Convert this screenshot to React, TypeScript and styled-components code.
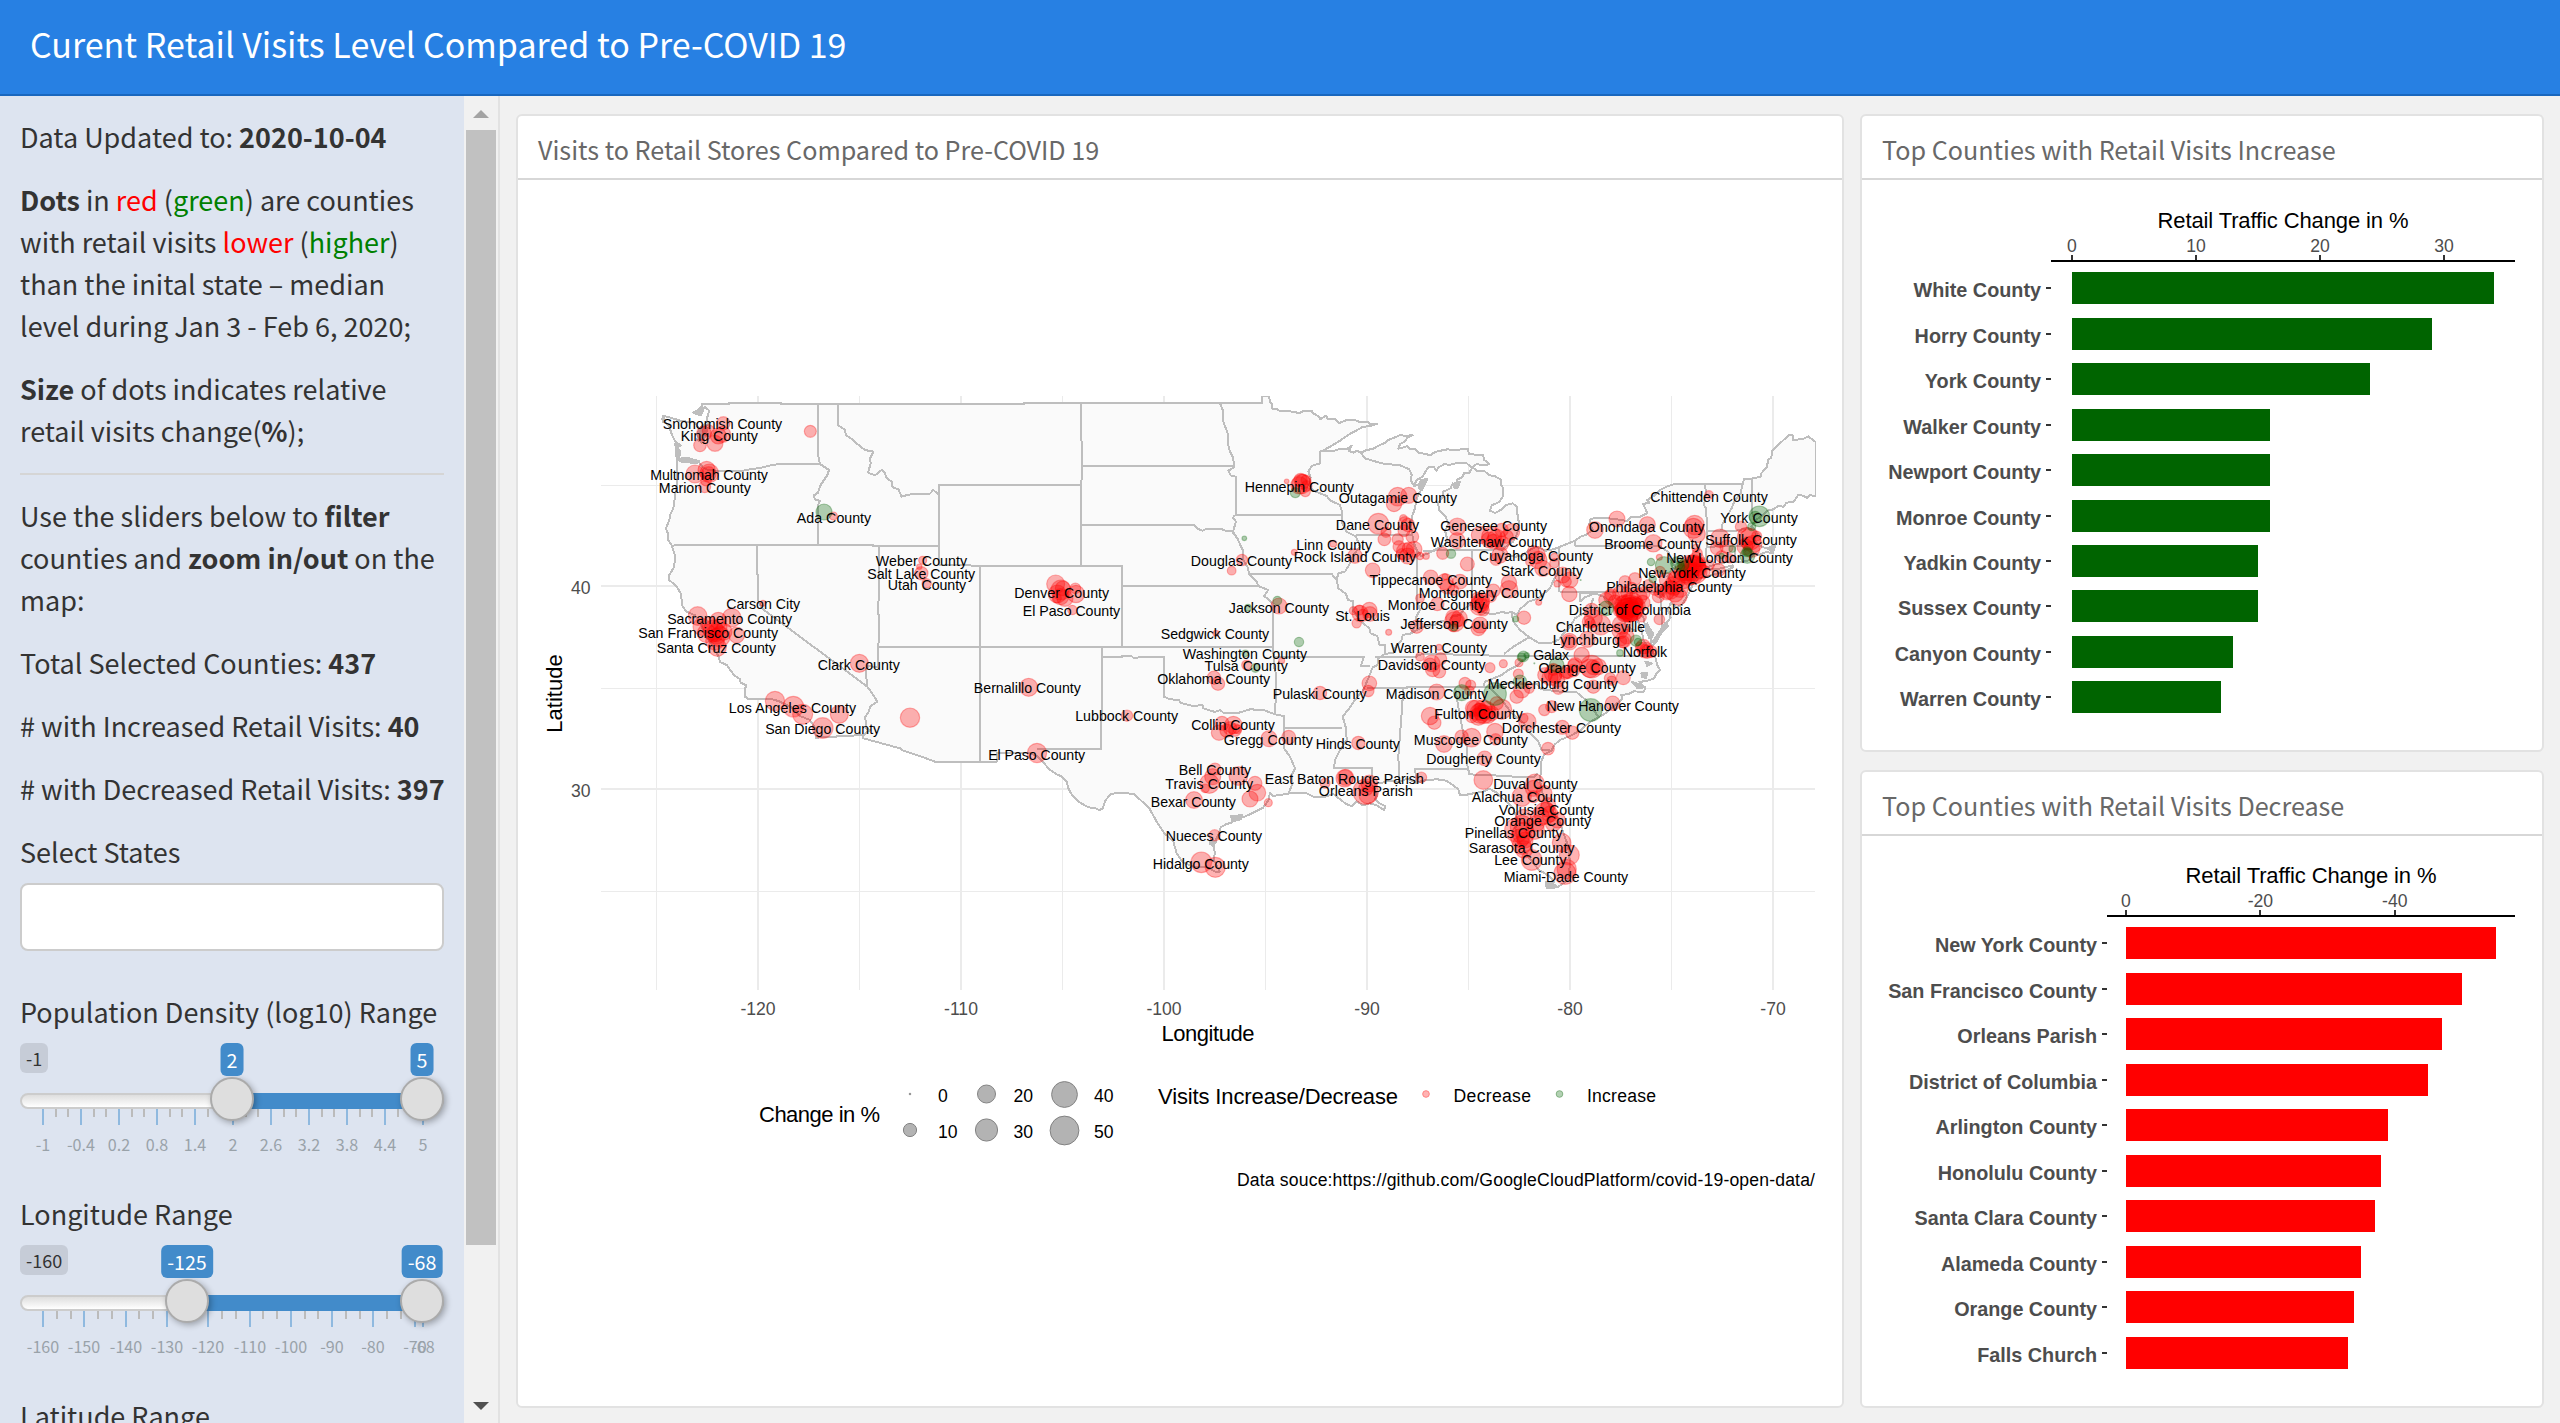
import React from "react";
import styled, { createGlobalStyle } from "styled-components";

const SANS = `"Noto Sans CJK SC", "Open Sans", sans-serif`;
const PLOT = `"Liberation Sans", Arial, sans-serif`;

const GlobalStyle = createGlobalStyle`
  *, *::before, *::after { box-sizing: border-box; }
  body { margin: 0; overflow: hidden; background: #f1f1f1; font-family: ${SANS}; }
`;

/* ---------- page frame ---------- */

const Page = styled.div`
  width: 2560px;
  height: 1423px;
  display: flex;
  flex-direction: column;
  overflow: hidden;
`;

const Navbar = styled.header`
  flex: none;
  height: 96px;
  padding: 0 30px;
  display: flex;
  align-items: center;
  background: #2780e3;
  border-bottom: 2px solid #1967be;
`;

const Brand = styled.h1`
  margin: 0 0 6px;
  font-size: 34px;
  line-height: 50px;
  font-weight: 400;
  color: #fff;
  white-space: nowrap;
`;

const Body = styled.div`
  flex: 1;
  min-height: 0;
  display: flex;
`;

const Sidebar = styled.aside`
  flex: none;
  width: 464px;
  padding: 20px 20px 0;
  overflow: hidden;
  background: #dde4f0;
  color: #333;
  font-size: 27px;
  line-height: 42px;
`;

const Scrollbar = styled.div`
  flex: none;
  width: 36px;
  padding: 14px 2px 13px;
  display: flex;
  flex-direction: column;
  align-items: center;
  background: #f1f1f1;
  border-right: 2px solid #e2e2e2;
`;

const Arrow = styled.span<{ $down?: boolean }>`
  border: 8px solid transparent;
  ${(p) =>
    p.$down
      ? "border-top-color: #505050; border-bottom-width: 0; margin-top: auto;"
      : "border-bottom-color: #a3a3a3; border-top-width: 0;"}
`;

const Thumb = styled.div`
  width: 30px;
  height: 1115px;
  margin-top: 12px;
  background: #c1c1c1;
`;

const Main = styled.main`
  flex: 1;
  display: flex;
  gap: 16px;
  padding: 18px 16px 15px;
`;

const Column = styled.div<{ $width: number }>`
  width: ${(p) => p.$width}px;
  display: flex;
  flex-direction: column;
  gap: 18px;
`;

const Card = styled.section`
  flex: 1;
  display: flex;
  flex-direction: column;
  background: #fff;
  border: 2px solid #e2e2e2;
  border-radius: 6px;
`;

const CardTitle = styled.h2`
  flex: none;
  height: 64px;
  margin: 0;
  padding: 5px 20px 0;
  border-bottom: 2px solid #d7d7d7;
  font-size: 25.15px;
  line-height: 56px;
  font-weight: 400;
  color: #686868;
  white-space: nowrap;
`;

const Plot = styled.svg`
  display: block;
  font-family: ${PLOT};
`;

/* ---------- sidebar ---------- */

const Para = styled.p`
  margin: 0 0 21px;
  white-space: nowrap;
`;

const Tone = styled.span<{ $color: string }>`
  color: ${(p) => p.$color};
`;

const Rule = styled.hr`
  height: 2px;
  margin: 21px 0 20px;
  border: 0;
  background: #d5d5d5;
`;

const Label = styled.div`
  white-space: nowrap;
`;

const SelectBox = styled.div`
  height: 68px;
  margin: 10px 0 40px;
  background: #fff;
  border: 2px solid #ccc;
  border-radius: 8px;
`;

const SliderBox = styled.div`
  position: relative;
  height: 118px;
  margin: 10px 0 32px;
  padding-top: 50px;
`;

const Track = styled.div`
  height: 16px;
  border: 2px solid #ccc;
  border-radius: 16px;
  background: linear-gradient(#dedede, #fff);
`;

const Range = styled.div`
  position: absolute;
  top: 50px;
  height: 16px;
  background: #428bca;
`;

const Handle = styled.div`
  position: absolute;
  top: 34px;
  width: 44px;
  height: 44px;
  margin-left: -22px;
  border: 2px solid #ababab;
  border-radius: 50%;
  background: #dedede;
  box-shadow: 2px 2px 6px rgba(0, 0, 0, 0.3);
`;

const MinBadge = styled.div`
  position: absolute;
  left: 0;
  top: 0;
  height: 30px;
  padding: 0 6px;
  border-radius: 6px;
  background: rgba(0, 0, 0, 0.1);
  font-size: 18px;
  line-height: 30px;
`;

const ValueBadge = styled.div`
  position: absolute;
  top: 0;
  height: 33px;
  padding: 1px 6px 0;
  border-radius: 6px;
  transform: translateX(-50%);
  background: #428bca;
  color: #fff;
  font-size: 19.7px;
  line-height: 32px;
`;

const Tick = styled.i<{ $major?: boolean }>`
  position: absolute;
  top: 66px;
  width: 2px;
  height: ${(p) => (p.$major ? 16 : 8)}px;
  margin-left: -1px;
  background: ${(p) => (p.$major ? "#8fb9df" : "#bbb")};
`;

const TickLabel = styled.span`
  position: absolute;
  top: 91px;
  transform: translateX(-50%);
  font-size: 16.1px;
  line-height: 20px;
  color: #99a2a9;
`;

type SliderProps = {
  min: string;
  from: string;
  to: string;
  fromX: number;
  toX: number;
  majors: [number, string][];
  minors: number[];
};

function Slider({ min, from, to, fromX, toX, majors, minors }: SliderProps) {
  return (
    <SliderBox>
      <Track />
      {majors.map(([x, label]) => (
        <React.Fragment key={label}>
          <Tick $major style={{ left: x }} />
          <TickLabel style={{ left: x }}>{label}</TickLabel>
        </React.Fragment>
      ))}
      {minors.map((x) => (
        <Tick key={x} style={{ left: x }} />
      ))}
      <Range style={{ left: fromX, width: toX - fromX }} />
      <Handle style={{ left: fromX }} />
      <Handle style={{ left: toX }} />
      <MinBadge>{min}</MinBadge>
      <ValueBadge style={{ left: fromX }}>{from}</ValueBadge>
      <ValueBadge style={{ left: toX }}>{to}</ValueBadge>
    </SliderBox>
  );
}

const minorsBetween = (start: number, step: number, groups: number) =>
  Array.from({ length: groups * 2 }, (_, i) =>
    Math.round(start + Math.floor(i / 2) * step + ((i % 2) + 1) * (step / 3))
  );

const densityMajors = ["-1", "-0.4", "0.2", "0.8", "1.4", "2", "2.6", "3.2", "3.8", "4.4", "5"].map(
  (t, i) => [23 + i * 38, t] as [number, string]
);
const lonMajors = [
  ...["-160", "-150", "-140", "-130", "-120", "-110", "-100", "-90", "-80", "-70"].map(
    (t, i) => [Math.round(23 + i * 41.3), t] as [number, string]
  ),
  [403, "-68"] as [number, string],
];

/* ---------- map data ---------- */
/* Points are kept at three units per pixel on four sheets laid side by side;
   each sheet has its own x origin. */

const SHEET = { w: 0, c: 1140, m: 2220, e: 2940 };
type Sheet = keyof typeof SHEET;

const line = (sheet: Sheet, pts: string) =>
  pts
    .trim()
    .split(/\s+/)
    .map((p) => {
      const [x, y] = p.split(",").map(Number);
      return `${x + SHEET[sheet]},${y}`;
    })
    .join(" ");

const outline = [
  line("w", "366,72 448,72 448,69 604,69 604,72 1140,72"),
  line("c", "192,72 192,69 906,69 906,48 927,48 930,66 936,72 936,86 950,86 960,94 990,94 1018,99 1030,93 1055,93 1060,100 1078,110 1080,118 1098,107 1104,118 1125,118 1138,129 1160,120 1180,119 1200,126"),
  line("m", "145,127 150,132 172,131 150,138 128,141 112,150 92,160 60,182 30,200 8,212 40,213 62,206 78,208 95,197 86,212 100,218 112,212 122,218 138,211 160,206 178,196 196,188 205,180 225,172 240,165 258,168 278,165 262,174 255,184 240,192 235,206 250,202 262,198 268,206 284,206 296,218 318,222 330,226 345,216 362,212 382,208 402,210 425,208 445,206 446,221 465,224 490,226 492,240 502,246 508,253 488,256 470,252 455,262 440,250 415,248 390,254 372,253 356,262 350,272 342,262 325,262 318,272 308,290 290,300 282,318 296,315 304,300 322,297 314,312 306,328 296,340 288,365 285,385 276,410 273,440 278,470 282,490 291,512 304,528 325,520 350,506 372,497 382,480 376,455 384,430 376,408 358,390 354,370 368,352 370,335 392,325 398,310 404,325 414,318 410,300 426,292 432,280 448,278 458,262 470,272 492,272 508,286 524,288 544,300 542,312 550,325 548,350 538,366 515,376 510,392 526,399 542,390 556,376 578,370 590,380 592,400 597,430 592,460 580,485 560,498 545,510 555,522 585,530 605,528 625,512 650,500 678,512 700,508 720,500"),
  line("e", "20,492 45,482 62,470 80,464 98,448 88,432 92,416 120,414 160,416 200,423 212,412 240,410 262,400 250,372 268,368 262,360 285,345 300,330 320,320 340,313 435,313 548,312 552,297 575,296 602,290 604,280 620,262 625,240 634,232 637,212 660,190 688,164 698,165 700,180 730,177 745,169 768,187 768,348 750,346 742,354 728,347 715,345 706,358 700,365 680,368 670,380 655,378 640,388 622,392 605,408 588,420 574,440 586,452 590,462 580,478 600,498 622,506 640,496 640,520 620,516 598,524 580,522 570,540 545,546 505,546 470,552 430,566 470,568 518,556 520,562 480,578 440,590 404,596 396,620 384,645 366,675 350,682 332,668 324,690 332,712 320,728 318,745 302,762 290,785 276,800 272,780 280,760 268,745 255,735 250,710 236,700 234,680 232,720 244,745 250,780 262,800 278,815 288,838 292,856 300,870 290,880 282,895 258,904 238,905 256,925 250,936 222,934 205,942 184,945 186,958 165,975 140,998 115,1012 90,1026 62,1050 35,1066 0,1080"),
  line("m", "704,1094 694,1112 672,1124 664,1145 662,1180 660,1200 668,1240 690,1280 720,1330 745,1400 750,1450 745,1500 712,1522 680,1522 680,1508 702,1506 690,1490 655,1468 625,1430 612,1408 592,1375 586,1345 592,1320 580,1285 556,1262 530,1238 508,1226 490,1235 460,1240 440,1244 420,1246 415,1228 400,1216 378,1202 352,1198 320,1200 288,1208 262,1196 238,1206 205,1202 188,1208 170,1210 160,1218 172,1244 165,1258 178,1270 196,1278 192,1290 170,1276 150,1270 128,1276 110,1264 95,1278 78,1272 58,1256 40,1242 12,1252 -5,1250"),
  line("c", "1060,1250 1040,1240 990,1240 965,1244 938,1248 930,1238 925,1262 908,1284 880,1298 850,1312 838,1305 832,1318 818,1310 816,1328 800,1332 782,1342 778,1356 770,1375 762,1390 764,1420 762,1440 780,1475 766,1475 740,1462 700,1460 668,1447 650,1420 640,1385 612,1358 590,1325 568,1285 550,1268 522,1242 500,1240 470,1238 450,1244 436,1262 428,1285 418,1290 404,1284 385,1282 355,1265 336,1245 325,1225 320,1205 306,1190 288,1182 268,1168 248,1145 232,1128 205,1118 110,1118 110,1145 0,1145"),
  line("w", "1065,1145 1025,1130 970,1112 960,1105 905,1090 850,1075 850,1065 708,1073 704,1042 690,1020 660,1008 640,985 600,965 575,957 505,957 495,950 497,915 482,908 480,898 462,885 440,855 420,846 416,830 400,800 372,760 362,730 345,706 320,695 308,680 302,640 290,620 268,600 268,585 282,562 286,530 275,496 265,480 264,462 258,445 268,420 270,405 280,385 285,350 292,300 292,250 288,210 300,195 286,185 276,165 268,140 256,125 246,118 250,107 275,114 300,122 345,128 360,150 362,178 372,185 376,160 386,140 380,118 388,92 376,82 366,84"),
].join(" ");

const borders: [Sheet, string][] = [
  ["w", "292,238 330,236 358,248 368,262 385,270 430,274 490,272 510,268 540,264 575,255 600,252 720,252"],
  ["w", "714,72 714,225 720,252 735,262 747,270 742,285 722,315 714,338 702,346 704,358 720,362 714,375 714,495"],
  ["w", "774,72 774,135 795,150 798,165 816,178 832,192 855,210 880,215 870,235 872,250 864,278 885,286 905,270 915,280 918,292 935,305 938,322 955,328 965,350 985,344 1020,341 1050,341 1060,330 1077,345"],
  ["w", "1077,556 1077,315 1503,315"],
  ["w", "1077,556 1626,559 1626,801"],
  ["w", "275,497 300,495 880,495 880,498 1077,498"],
  ["w", "531,497 534,660 545,685 862,920"],
  ["w", "898,498 895,700 898,720 893,862 865,858 857,870 862,920 880,945 892,965 872,978 866,995 856,1010 858,1045 870,1050 850,1066"],
  ["w", "898,801 2080,801"],
  ["w", "1200,556 1200,1145"],
  ["c", "363,69 363,175 366,190 366,280 363,320 363,556"],
  ["c", "366,258 820,258"],
  ["c", "363,435 702,435 712,446 728,452 740,446 782,446 800,454 818,454 828,468"],
  ["c", "486,618 892,618"],
  ["c", "780,69 788,90 788,120 803,160 806,205 820,235 822,262 805,272 812,286 828,290 828,405 1145,405"],
  ["c", "822,405 820,415 828,425 818,458 832,475 848,510 850,540 862,560 868,582 890,605 895,618 925,630 912,648 930,662 940,672 940,805"],
  ["c", "868,582 1115,582 1128,598"],
  ["c", "1088,210 1080,215 1080,250 1055,258 1045,275 1052,292 1048,315 1060,332 1100,348 1112,362 1140,375 1146,395 1145,425 1160,455 1188,470"],
  ["c", "427,801 427,832 425,1000 423,1107 230,1107"],
  ["c", "427,832 485,832 485,829 515,829 520,833 612,830 612,950 630,958 658,960 660,968 700,978 728,975 730,985 765,996 780,990 790,998 830,1000 870,988 910,990 945,1003"],
  ["c", "940,805 942,860 948,880 948,940 945,1003 972,1008 972,1105 990,1130 1005,1165 995,1185 998,1210 985,1242"],
  ["c", "972,1043 1145,1043"],
  ["c", "940,831 1212,831 1202,858 1230,858"],
  ["m", "108,470 120,500 100,525 90,550 75,575 55,580 50,600 55,625 78,642 84,660 100,664 98,690 120,722 148,745 152,760 172,768 178,795 195,795 194,822 175,835 172,855 158,862 145,895 130,930 105,960 88,985 68,1010 78,1045 80,1080 60,1110 45,1140 42,1165 157,1165 155,1190 165,1215"],
  ["m", "194,822 220,818 230,795 245,780 248,765 275,760 290,750 310,740 345,735 365,722 385,730 395,710 420,705 430,690 450,672 480,695 520,703 548,695 560,700 575,695 590,705 600,688 625,665 655,655 690,625 700,602 716,575 716,505 716,636"],
  ["m", "575,700 580,725 600,750 628,772 605,785 580,800 552,822"],
  ["m", "628,772 655,788 690,790 718,778 730,760 750,740 765,715 790,700 810,680 820,655"],
  ["m", "108,466 280,466"],
  ["m", "122,218 135,235 185,250 240,256 268,268 275,285 272,300 282,318"],
  ["m", "291,512 291,660 300,690 288,712 290,730 272,760"],
  ["m", "310,512 457,510 545,508"],
  ["m", "457,510 457,672"],
  ["m", "165,830 290,830 290,824 345,822 560,828 1005,829"],
  ["m", "140,925 260,925 260,920 440,920 490,920 560,922"],
  ["m", "250,925 245,1000 235,1130 238,1205"],
  ["m", "405,922 420,1010 430,1060 440,1100 440,1145 448,1183 540,1187 610,1192 640,1192 655,1180"],
  ["m", "290,1205 285,1167 440,1167"],
  ["m", "510,925 545,960 575,1000 612,1030 630,1060 655,1085 665,1110 690,1110"],
  ["m", "510,925 560,910 650,912 665,928 735,937 770,937 800,962 835,1010"],
  ["m", "490,920 495,905 520,895 545,885 565,870 595,855 610,840 625,830"],
  ["e", "0,636 300,636 305,700 305,745 322,745"],
  ["e", "60,665 60,638 105,640 75,652 60,665"],
  ["e", "105,640 130,650 150,670 170,690 190,715 200,740 230,755"],
  ["e", "45,485 45,497 300,497 312,508 325,515 330,535 345,560 322,590 336,610 315,635 300,650"],
  ["e", "330,535 400,575"],
  ["e", "435,313 438,340 432,375 438,385 442,450 440,500 435,545"],
  ["e", "548,312 542,340 525,360 515,385 500,410 488,430 484,452"],
  ["e", "440,452 530,452 560,445 575,446"],
  ["e", "440,500 550,498 558,515"],
  ["e", "525,500 525,545"],
  ["e", "575,296 577,400 585,425"],
];

/* inlets and sounds dense enough to read as solid grey */
const inlets: [Sheet, string][] = [
  ["w", "340,98 355,90 362,82 370,92 362,106 350,102"],
  ["w", "352,178 356,150 364,140 376,130 382,150 372,172 364,188"],
  ["w", "250,112 256,122 248,126"],
  ["w", "286,192 302,196 290,202 300,212 298,236 290,234"],
  ["w", "295,236 325,234 358,244 350,250 300,244"],
  ["c", "812,1308 846,1306 842,1318 818,1324"],
  ["c", "752,1378 768,1385 760,1398 750,1392"],
  ["m", "678,1506 700,1512 715,1522 680,1524"],
  ["m", "405,310 420,305 412,325"],
  ["m", "296,312 322,296 306,330 298,325"],
  ["e", "244,880 262,878 258,894 246,890"],
  ["e", "215,905 235,912 256,922 232,924"],
  ["e", "256,845 275,850 262,858"],
  ["e", "620,505 645,498 640,516"],
  ["e", "262,730 275,760 268,775 258,750"],
  ["e", "316,728 324,738 300,764 282,790 278,786 298,756"],
];

type Dot = [number, number, number];

const decrease: Record<Sheet, Dot[]> = {
  w: [
    [430, 130, 20], [372, 160, 22], [385, 152, 18], [360, 196, 19], [405, 190, 24], [415, 168, 24], [428, 163, 24], [691, 154, 18],
    [345, 282, 27], [380, 270, 26], [388, 280, 28], [386, 282, 22], [374, 320, 18], [378, 302, 16], [760, 408, 12],
    [1028, 541, 12], [1018, 560, 8], [1024, 580, 20], [1040, 610, 14], [549, 670, 9],
    [353, 708, 28], [455, 713, 28], [415, 722, 25], [365, 740, 26], [380, 760, 28], [400, 750, 30], [410, 762, 30], [420, 770, 30], [405, 782, 28],
    [430, 755, 26], [412, 802, 27], [470, 765, 24], [390, 735, 24], [417, 742, 24], [408, 765, 20], [400, 770, 16],
    [838, 850, 27], [585, 963, 29], [640, 980, 31], [668, 1003, 30], [778, 1003, 27], [728, 1044, 31], [990, 1013, 29],
  ],
  c: [
    [287, 612, 27], [303, 630, 30], [292, 642, 27], [302, 650, 24], [315, 655, 24], [346, 625, 16], [348, 642, 26], [308, 625, 22], [290, 655, 14], [337, 690, 14],
    [206, 922, 27], [501, 1007, 17], [231, 1119, 29], [1022, 300, 20], [1025, 312, 29], [1018, 316, 26], [1036, 335, 15], [1038, 300, 15], [1028, 305, 22], [1040, 318, 16], [980, 304, 7],
    [846, 540, 17], [815, 572, 13], [957, 678, 24], [768, 760, 9], [860, 855, 15], [965, 842, 9], [762, 893, 20], [774, 911, 20], [1080, 939, 20], [1003, 517, 9], [1120, 491, 10],
    [786, 1030, 21], [820, 1035, 26], [777, 1058, 23], [800, 1052, 20], [825, 1050, 19], [810, 1045, 20], [832, 1048, 13], [927, 1076, 24], [986, 1072, 21],
    [765, 1167, 18], [758, 1190, 24], [748, 1211, 29], [735, 1225, 13], [835, 1188, 28], [885, 1210, 21], [892, 1238, 25], [870, 1257, 24], [925, 1268, 12],
    [702, 1260, 25], [764, 1366, 17], [724, 1447, 31], [766, 1462, 30],
  ],
  m: [
    [233, 350, 28], [266, 346, 24], [222, 372, 23], [175, 431, 31], [255, 430, 20], [264, 435, 20], [250, 415, 11], [198, 457, 15], [193, 478, 19], [233, 478, 17], [277, 470, 19], [237, 500, 18],
    [255, 515, 26], [263, 528, 24], [282, 508, 24], [245, 522, 16], [265, 505, 18], [300, 528, 11], [318, 528, 10], [105, 528, 22], [158, 571, 22], [252, 452, 18],
    [412, 440, 26], [411, 482, 24], [368, 520, 18], [442, 552, 21], [480, 465, 26], [515, 470, 30], [530, 475, 27], [508, 480, 24], [545, 450, 20], [545, 490, 22], [575, 455, 24], [560, 470, 20], [520, 485, 22],
    [528, 538, 18], [540, 525, 24], [650, 525, 26], [655, 540, 26], [668, 565, 24], [640, 515, 18], [630, 545, 13], [703, 550, 14], [703, 532, 12], [728, 585, 24], [750, 600, 24], [738, 605, 16], [712, 611, 10], [748, 642, 23],
    [567, 608, 23], [567, 628, 26], [520, 632, 20], [512, 650, 17], [480, 670, 28], [478, 678, 28], [485, 662, 24], [490, 690, 18], [472, 655, 18], [482, 675, 20],
    [332, 592, 22], [375, 605, 24], [382, 620, 22], [420, 605, 22], [375, 590, 9], [400, 630, 16], [352, 672, 20], [300, 655, 13], [656, 667, 9], [290, 740, 20], [612, 713, 20],
    [400, 712, 23], [404, 725, 30], [418, 715, 24], [410, 722, 20], [400, 740, 15], [475, 745, 22], [480, 735, 24], [206, 757, 9], [148, 690, 23], [120, 700, 24], [100, 692, 12], [110, 730, 14], [150, 702, 22], [128, 706, 18], [118, 690, 15],
    [357, 802, 9], [300, 830, 13], [362, 836, 18], [335, 850, 25], [338, 868, 22], [358, 875, 19], [330, 852, 18], [510, 863, 15], [550, 851, 12], [597, 848, 12], [148, 910, 22], [145, 933, 17],
    [350, 936, 24], [435, 910, 18], [452, 915, 15], [448, 932, 14], [595, 882, 15], [605, 930, 24], [590, 950, 20], [628, 925, 15], [330, 1008, 26], [343, 1028, 20],
    [460, 985, 24], [470, 990, 30], [480, 1000, 30], [492, 1003, 28], [500, 990, 26], [475, 1010, 26], [515, 1000, 22], [490, 985, 26], [505, 1008, 22], [455, 1010, 18], [530, 970, 20], [545, 988, 30],
    [485, 998, 24], [478, 990, 20],
    [525, 1055, 25], [527, 1078, 17], [372, 1092, 25], [425, 1070, 20], [455, 1073, 28], [494, 1135, 22], [622, 1025, 26], [610, 1015, 14], [673, 990, 17], [695, 980, 18], [727, 1042, 21], [757, 1058, 20], [684, 1106, 19],
    [304, 1192, 16], [115, 1089, 20], [15, 1210, 15], [77, 1192, 24], [74, 1195, 26], [148, 1210, 25], [137, 1235, 38], [143, 1245, 26], [138, 1225, 22], [490, 1200, 28],
    [645, 1210, 28], [640, 1225, 24], [605, 1250, 29], [640, 1250, 18], [672, 1240, 24], [685, 1275, 22], [675, 1300, 33], [660, 1310, 28], [690, 1302, 24], [680, 1288, 22], [650, 1330, 24],
    [605, 1340, 34], [590, 1350, 36], [610, 1360, 33], [600, 1375, 28], [615, 1380, 24], [605, 1395, 28], [612, 1408, 26], [645, 1350, 28], [700, 1330, 24], [712, 1320, 24], [610, 1310, 22],
    [635, 1440, 31], [725, 1388, 28], [748, 1425, 30], [735, 1480, 33], [740, 1467, 29],
    [700, 880, 27], [690, 892, 24], [712, 900, 22], [675, 885, 22], [715, 925, 18], [740, 875, 20], [700, 868, 18], [705, 890, 20], [765, 855, 22], [745, 880, 16],
  ],
  e: [
    [105, 450, 25], [171, 417, 24], [262, 434, 24], [404, 435, 29], [400, 445, 30], [410, 462, 26], [447, 345, 13], [543, 440, 17], [480, 475, 28], [470, 505, 19], [500, 500, 20],
    [560, 470, 28], [570, 478, 32], [580, 492, 26], [590, 468, 15], [555, 500, 24], [575, 508, 24], [565, 490, 20], [280, 490, 26], [298, 532, 9], [300, 575, 16],
    [390, 560, 34], [400, 565, 38], [405, 575, 36], [380, 572, 30], [395, 580, 34], [410, 560, 28], [388, 588, 28], [402, 552, 28], [410, 538, 22], [412, 520, 15], [430, 575, 20], [365, 578, 24], [370, 600, 26], [350, 600, 26],
    [385, 565, 26], [395, 572, 22], [408, 552, 24], [380, 585, 24], [422, 545, 14], [408, 505, 12],
    [340, 618, 28], [360, 628, 24], [330, 630, 28], [320, 638, 22], [345, 640, 26], [355, 650, 26], [335, 622, 20], [300, 635, 18], [295, 650, 18], [285, 628, 18], [320, 600, 22], [345, 590, 18], [475, 570, 20], [510, 535, 14], [485, 530, 18], [448, 555, 15],
    [225, 597, 19], [195, 605, 18], [180, 640, 22], [155, 650, 24], [138, 660, 22], [215, 625, 18], [250, 640, 20], [235, 650, 26], [248, 668, 22], [165, 665, 20], [152, 645, 16], [200, 640, 18], [265, 615, 16],
    [200, 680, 36], [210, 685, 40], [205, 690, 36], [215, 672, 34], [190, 677, 30], [220, 695, 28], [195, 700, 26], [230, 680, 26], [210, 700, 26], [205, 680, 26], [210, 685, 24], [180, 692, 20], [245, 712, 14],
    [196, 688, 30], [216, 682, 30], [204, 694, 28], [225, 672, 22], [188, 690, 24], [212, 700, 22],
    [298, 718, 16], [95, 692, 22], [100, 715, 27], [85, 725, 18], [122, 735, 30], [90, 730, 16], [185, 735, 28], [180, 752, 24], [200, 770, 22], [190, 780, 24], [190, 785, 18], [186, 783, 14],
    [250, 800, 22], [255, 810, 24], [262, 815, 20], [240, 800, 14], [255, 808, 15], [274, 815, 18], [65, 825, 23], [95, 860, 34], [90, 865, 28], [115, 860, 24], [100, 862, 22], [42, 855, 18], [40, 872, 19], [82, 778, 24], [28, 785, 25], [28, 785, 19],
    [100, 920, 20], [150, 895, 17], [190, 893, 21], [155, 902, 14], [15, 880, 18], [158, 970, 22],
  ],
};

const increase: Record<Sheet, Dot[]> = {
  w: [[732, 396, 24]],
  c: [[1006, 338, 15], [853, 475, 7], [952, 662, 13], [864, 683, 10], [1017, 786, 14], [856, 820, 10], [886, 864, 13]],
  m: [[393, 521, 14], [587, 717, 9], [402, 742, 11], [610, 829, 16], [605, 832, 13], [620, 826, 8], [643, 850, 1.5], [425, 938, 24], [600, 905, 20], [525, 942, 34], [710, 855, 22], [782, 600, 1.5]],
  e: [[598, 409, 31], [575, 440, 12], [586, 412, 18], [517, 507, 10], [561, 515, 15], [562, 516, 12], [562, 528, 22], [273, 546, 11], [312, 556, 26], [278, 597, 11], [352, 550, 20], [370, 555, 17], [360, 560, 14], [139, 685, 22], [228, 782, 17], [234, 786, 11], [180, 819, 10], [92, 990, 34], [485, 528, 8]],
};

/* label, left edge, right edge, middle of the capitals */
const counties: [Sheet, string, number, number, number][] = [
  ["w", "Snohomish County", 250, 605, 130],
  ["w", "King County", 304, 532, 166],
  ["w", "Multnomah County", 212, 562, 283],
  ["w", "Marion County", 238, 511, 322],
  ["w", "Ada County", 652, 872, 412],
  ["w", "Weber County", 889, 1160, 541],
  ["w", "Salt Lake County", 863, 1184, 580],
  ["w", "Utah County", 925, 1157, 613],
  ["w", "Carson City", 440, 659, 672],
  ["w", "Sacramento County", 263, 635, 715],
  ["w", "San Francisco County", 176, 593, 757],
  ["w", "Santa Cruz County", 232, 586, 802],
  ["w", "Clark County", 715, 958, 853],
  ["w", "Los Angeles County", 448, 827, 982],
  ["w", "San Diego County", 557, 899, 1046],
  ["c", "Denver County", 164, 446, 637],
  ["c", "El Paso County", 190, 479, 691],
  ["c", "Bernalillo County", 43, 361, 922],
  ["c", "Lubbock County", 347, 653, 1008],
  ["c", "El Paso County", 86, 374, 1123],
  ["c", "Hennepin County", 856, 1180, 319],
  ["c", "Douglas County", 694, 995, 541],
  ["c", "Jackson County", 808, 1106, 682],
  ["c", "Sedgwick County", 604, 926, 760],
  ["c", "Washington County", 670, 1040, 820],
  ["c", "Tulsa County", 735, 982, 856],
  ["c", "Oklahoma County", 593, 929, 895],
  ["c", "Collin County", 695, 943, 1035],
  ["c", "Gregg County", 793, 1057, 1078],
  ["c", "Bell County", 658, 872, 1168],
  ["c", "Travis County", 617, 878, 1210],
  ["c", "Bexar County", 574, 826, 1264],
  ["c", "Nueces County", 619, 905, 1368],
  ["c", "Hidalgo County", 580, 865, 1450],
  ["m", "Outagamie County", 58, 410, 352],
  ["m", "Dane County", 49, 296, 433],
  ["m", "Linn County", -70, 155, 493],
  ["m", "Rock Island County", -77, 287, 531],
  ["m", "Pulaski County", -140, 138, 940],
  ["m", "St. Louis", 47, 208, 706],
  ["m", "Tippecanoe County", 150, 515, 598],
  ["m", "Genesee County", 362, 680, 436],
  ["m", "Washtenaw County", 334, 698, 484],
  ["m", "Cuyahoga County", 478, 818, 526],
  ["m", "Stark County", 544, 788, 571],
  ["m", "Montgomery County", 298, 676, 637],
  ["m", "Monroe County", 205, 493, 673],
  ["m", "Jefferson County", 243, 562, 730],
  ["m", "Warren County", 214, 500, 804],
  ["m", "Davidson County", 175, 495, 853],
  ["m", "Galax", 641, 746, 823],
  ["m", "Madison County", 199, 503, 940],
  ["m", "Mecklenburg County", 505, 892, 910],
  ["m", "Fulton County", 344, 607, 1000],
  ["m", "Muscogee County", 283, 622, 1078],
  ["m", "Dougherty County", 320, 661, 1135],
  ["m", "Hinds County", -11, 238, 1092],
  ["m", "East Baton Rouge Parish", -164, 310, 1197],
  ["m", "Orleans Parish", -2, 277, 1231],
  ["m", "Duval County", 521, 771, 1210],
  ["m", "Alachua County", 457, 754, 1249],
  ["m", "Volusia County", 538, 821, 1288],
  ["m", "Orange County", 524, 812, 1321],
  ["m", "Pinellas County", 436, 726, 1357],
  ["m", "Sarasota County", 448, 762, 1402],
  ["m", "Lee County", 524, 738, 1438],
  ["m", "Miami-Dade County", 553, 923, 1489],
  ["e", "Chittenden County", 272, 622, 349],
  ["e", "York County", 482, 712, 412],
  ["e", "Onondaga County", 88, 432, 439],
  ["e", "Broome County", 134, 423, 490],
  ["e", "Suffolk County", 437, 709, 478],
  ["e", "New London County", 320, 697, 532],
  ["e", "New York County", 236, 556, 577],
  ["e", "Philadelphia County", 140, 515, 620],
  ["e", "District of Columbia", 28, 391, 688],
  ["e", "Charlottesville", -11, 254, 741],
  ["e", "Lynchburg", -20, 178, 778],
  ["e", "Norfolk", 190, 320, 814],
  ["e", "Orange County", -63, 226, 862],
  ["e", "New Hanover County", -39, 355, 976],
  ["e", "Dorchester County", -173, 182, 1042],
];

const MAP_X = 580;
const MAP_Y = 380;

const AxisText = styled.text`
  font-size: 17.6px;
  fill: #4d4d4d;
`;
const AxisTitle = styled.text`
  font-size: 22px;
  fill: #000;
`;
const KeyText = styled.text`
  font-size: 17.6px;
  fill: #000;
`;
const CountyText = styled.text`
  font-size: 14.2px;
  fill: #000;
`;
const BarText = styled.text`
  font-size: 19.8px;
  font-weight: 700;
  fill: #4d4d4d;
`;

function Dots({ data, color }: { data: Record<Sheet, Dot[]>; color: string }) {
  return (
    <g fill={color} stroke={color} fillOpacity={0.3} strokeOpacity={0.3} strokeWidth={1.2}>
      {(Object.keys(data) as Sheet[]).flatMap((s) =>
        data[s].map(([x, y, r], i) => (
          <circle key={s + i} cx={MAP_X + (x + SHEET[s]) / 3} cy={MAP_Y + y / 3} r={r / 3} />
        ))
      )}
    </g>
  );
}

const sizeKeys: [number, number, number, string, number][] = [
  [910, 1094, 0.8, "0", 938],
  [910, 1130, 6.6, "10", 938],
  [986.5, 1094, 9, "20", 1013.5],
  [986.5, 1130, 11.1, "30", 1013.5],
  [1064.5, 1094.5, 12.9, "40", 1094],
  [1064.5, 1130.5, 14.4, "50", 1094],
];

function VisitsMap() {
  return (
    <Plot width={1324} height={1226} viewBox="518 180 1324 1226">
      <defs>
        <clipPath id="panel">
          <rect x={601} y={396} width={1215} height={594} />
        </clipPath>
      </defs>
      <g stroke="#ebebeb" shapeRendering="crispEdges">
        {[656, 859, 1062, 1265, 1468, 1671].map((x) => (
          <line key={x} x1={x + 0.5} x2={x + 0.5} y1={396} y2={990} />
        ))}
        {[485, 688, 891].map((y) => (
          <line key={y} y1={y + 0.5} y2={y + 0.5} x1={601} x2={1815} />
        ))}
        {[758, 961, 1164, 1367, 1570, 1773].map((x) => (
          <line key={x} x1={x} x2={x} y1={396} y2={990} strokeWidth={2} />
        ))}
        {[586, 789].map((y) => (
          <line key={y} y1={y} y2={y} x1={601} x2={1815} strokeWidth={2} />
        ))}
      </g>
      <g clipPath="url(#panel)">
        <g
          transform={`translate(${MAP_X} ${MAP_Y}) scale(0.33333)`}
          stroke="#bebebe"
          strokeWidth={6}
          fill="none"
          strokeLinejoin="round"
          shapeRendering="crispEdges"
        >
          <polygon points={outline} fill="#fafafa" />
          {borders.map(([s, pts], i) => (
            <polyline key={i} points={line(s, pts)} />
          ))}
          {inlets.map(([s, pts], i) => (
            <polygon key={i} points={line(s, pts)} fill="#bebebe" />
          ))}
        </g>
        <Dots data={decrease} color="#ff0000" />
        <Dots data={increase} color="#006400" />
      </g>
      {counties.map(([s, name, x1, x2, y], i) => (
        <CountyText
          key={i}
          x={MAP_X + (SHEET[s] + x1) / 3 - 0.5}
          y={MAP_Y + y / 3 + 5.3}
          textLength={(x2 - x1) / 3 + 1}
        >
          {name}
        </CountyText>
      ))}
      {[-120, -110, -100, -90, -80, -70].map((v, i) => (
        <AxisText key={v} x={758 + i * 203} y={1014.5} textAnchor="middle">
          {v}
        </AxisText>
      ))}
      <AxisText x={590.5} y={593.5} textAnchor="end">40</AxisText>
      <AxisText x={590.5} y={796.5} textAnchor="end">30</AxisText>
      <AxisTitle x={1208} y={1041} textAnchor="middle" textLength={93}>Longitude</AxisTitle>
      <AxisTitle transform="translate(562 693.5) rotate(-90)" textAnchor="middle">Latitude</AxisTitle>
      <AxisTitle x={759} y={1122} textLength={121}>Change in %</AxisTitle>
      {sizeKeys.map(([cx, cy, r, label, tx]) => (
        <g key={label}>
          <circle cx={cx} cy={cy} r={r} fill="#b3b3b3" stroke="#838383" />
          <KeyText x={tx} y={cy > 1110 ? 1137.5 : 1101.5}>{label}</KeyText>
        </g>
      ))}
      <AxisTitle x={1158} y={1104} textLength={240}>Visits Increase/Decrease</AxisTitle>
      <circle cx={1426} cy={1094} r={3.3} fill="#ffb3b3" stroke="#ff8282" />
      <KeyText x={1453.5} y={1102} textLength={77.5}>Decrease</KeyText>
      <circle cx={1559.5} cy={1094} r={3.3} fill="#b3d1b3" stroke="#82b182" />
      <KeyText x={1587} y={1102} textLength={69}>Increase</KeyText>
      <KeyText x={1237} y={1186} textLength={578}>
        Data souce:https://github.com/GoogleCloudPlatform/covid-19-open-data/
      </KeyText>
    </Plot>
  );
}

/* ---------- bar charts ---------- */

type BarsProps = {
  top: number;
  color: string;
  zero: number;
  unit: number;
  axisStart: number;
  axisY: number;
  firstMid: number;
  step: number;
  ticks: [number, string][];
  rows: [string, number][];
};

function Bars({ top, color, zero, unit, axisStart, axisY, firstMid, step, ticks, rows }: BarsProps) {
  return (
    <Plot width={680} height={570} viewBox={`1862 ${top} 680 570`}>
      <AxisTitle x={(axisStart + 2515) / 2} y={axisY - 33} textAnchor="middle" textLength={251}>
        Retail Traffic Change in %
      </AxisTitle>
      {ticks.map(([v, label]) => (
        <g key={label}>
          <AxisText x={zero + v * unit} y={axisY - 9} textAnchor="middle">{label}</AxisText>
          <rect x={Math.round(zero + v * unit) - 1} y={axisY - 6} width={2} height={5} fill="#333" />
        </g>
      ))}
      <rect x={axisStart} y={axisY - 1} width={2515 - axisStart} height={2} fill="#000" />
      {rows.map(([name, value], i) => {
        const mid = firstMid + i * step;
        return (
          <g key={name}>
            <BarText x={axisStart - 10} y={Math.round(mid + 9)} textAnchor="end">{name}</BarText>
            <rect x={axisStart - 5} y={Math.round(mid) - 1} width={5} height={2} fill="#333" />
            <rect x={zero} y={Math.round(mid - 16)} width={Math.round(value * unit)} height={32} fill={color} />
          </g>
        );
      })}
    </Plot>
  );
}

const increaseRows: [string, number][] = [
  ["White County", 34], ["Horry County", 29], ["York County", 24], ["Walker County", 16], ["Newport County", 16],
  ["Monroe County", 16], ["Yadkin County", 15], ["Sussex County", 15], ["Canyon County", 13], ["Warren County", 12],
];
const decreaseRows: [string, number][] = [
  ["New York County", 55], ["San Francisco County", 50], ["Orleans Parish", 47], ["District of Columbia", 45], ["Arlington County", 39],
  ["Honolulu County", 38], ["Santa Clara County", 37], ["Alameda County", 35], ["Orange County", 34], ["Falls Church", 33],
];

export default function App() {
  return (
    <Page>
      <GlobalStyle />
      <Navbar>
        <Brand>Curent Retail Visits Level Compared to Pre-COVID 19</Brand>
      </Navbar>
      <Body>
        <Sidebar>
          <Para>Data Updated to: <b>2020-10-04</b></Para>
          <Para>
            <b>Dots</b> in <Tone $color="red">red</Tone> (<Tone $color="green">green</Tone>) are counties<br />
            with retail visits <Tone $color="red">lower</Tone> (<Tone $color="green">higher</Tone>)<br />
            than the inital state – median<br />
            level during Jan 3 - Feb 6, 2020;
          </Para>
          <Para>
            <b>Size</b> of dots indicates relative<br />
            retail visits change(<b>%</b>);
          </Para>
          <Rule />
          <Para>
            Use the sliders below to <b>filter</b><br />
            counties and <b>zoom in/out</b> on the<br />
            map:
          </Para>
          <Para>Total Selected Counties: <b>437</b></Para>
          <Para># with Increased Retail Visits: <b>40</b></Para>
          <Para># with Decreased Retail Visits: <b>397</b></Para>
          <Label>Select States</Label>
          <SelectBox />
          <Label>Population Density (log10) Range</Label>
          <Slider min="-1" from="2" to="5" fromX={212} toX={402} majors={densityMajors} minors={minorsBetween(23, 38, 10)} />
          <Label>Longitude Range</Label>
          <Slider min="-160" from="-125" to="-68" fromX={167} toX={402} majors={lonMajors} minors={minorsBetween(23, 41.3, 9)} />
          <Label>Latitude Range</Label>
        </Sidebar>
        <Scrollbar>
          <Arrow />
          <Thumb />
          <Arrow $down />
        </Scrollbar>
        <Main>
          <Column $width={1328}>
            <Card>
              <CardTitle>Visits to Retail Stores Compared to Pre-COVID 19</CardTitle>
              <VisitsMap />
            </Card>
          </Column>
          <Column $width={684}>
            <Card>
              <CardTitle>Top Counties with Retail Visits Increase</CardTitle>
              <Bars
                top={180} color="#006400" zero={2072} unit={12.4} axisStart={2051} axisY={261} firstMid={288.3} step={45.45}
                ticks={[[0, "0"], [10, "10"], [20, "20"], [30, "30"]]} rows={increaseRows}
              />
            </Card>
            <Card>
              <CardTitle>Top Counties with Retail Visits Decrease</CardTitle>
              <Bars
                top={836} color="#ff0000" zero={2126} unit={6.72} axisStart={2107} axisY={916} firstMid={943.3} step={45.48}
                ticks={[[0, "0"], [20, "-20"], [40, "-40"]]} rows={decreaseRows}
              />
            </Card>
          </Column>
        </Main>
      </Body>
    </Page>
  );
}
